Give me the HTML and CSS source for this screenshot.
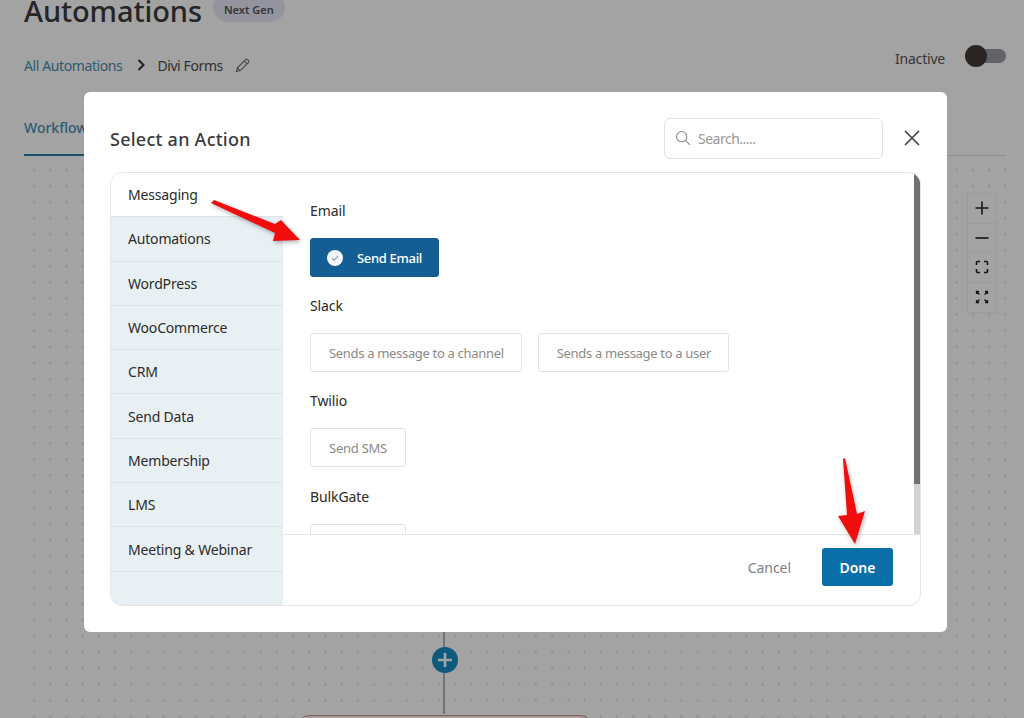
FILE: index.html
```html
<!DOCTYPE html>
<html lang="en">
<head>
<meta charset="utf-8">
<title>Select an Action</title>
<link rel="stylesheet" href="styles.css">
</head>
<body>
<div class="page">
  <header class="title-row">
    <h1 class="title">Automations</h1>
    <span class="badge">Next Gen</span>
  </header>
  <div class="crumb-row">
    <nav class="crumbs">
      <a class="crumb-link">All Automations</a>
      <svg class="chevron" viewBox="0 0 8 12"><path d="M1.500 1l5 5-5 5" fill="none" stroke="currentColor" stroke-width="2"/></svg>
      <span class="crumb-current">Divi Forms</span>
      <svg class="pencil" viewBox="0 0 16 16"><path d="M1.500 14.500l1-4L11 2a1.800 1.800 0 0 1 2.800 0l.3.3a1.800 1.800 0 0 1 0 2.700l-8.600 8.500zM2.500 10.500l3 3M10 3.200l2.800 2.800" fill="none" stroke="currentColor" stroke-width="1.100"/></svg>
    </nav>
    <div class="status">
      <span class="status-label">Inactive</span>
      <span class="toggle"><span class="toggle-thumb"></span></span>
    </div>
  </div>
  <div class="tabs"><span class="tab">Workflow</span></div>
  <main class="canvas">
    <div class="zoom-controls">
      <button class="zoom-cell"><svg viewBox="0 0 16 16"><path d="M8 1.500v13M1.500 8h13" stroke="currentColor" stroke-width="1.600"/></svg></button>
      <button class="zoom-cell"><svg viewBox="0 0 16 16"><path d="M1.500 8h13" stroke="currentColor" stroke-width="1.600"/></svg></button>
      <button class="zoom-cell"><svg viewBox="0 0 16 16"><path d="M2.500 6V3.500a1 1 0 0 1 1-1H6M10 2.500h2.500a1 1 0 0 1 1 1V6M13.500 10v2.500a1 1 0 0 1-1 1H10M6 13.500H3.500a1 1 0 0 1-1-1V10" fill="none" stroke="currentColor" stroke-width="1.600"/></svg></button>
      <button class="zoom-cell"><svg viewBox="0 0 16 16"><path d="M2.500 2.500l3 3M13.500 2.500l-3 3M2.500 13.500l3-3M13.500 13.500l-3-3M2.500 5V2.500H5M11 2.500h2.500V5M2.500 11v2.500H5M13.500 11v2.500H11" fill="none" stroke="currentColor" stroke-width="1.300"/></svg></button>
    </div>
    <div class="flow-line"></div>
    <div class="add-node"><svg viewBox="0 0 26 26"><path d="M13 6v14M6 13h14" stroke="#fff" stroke-width="2.600"/></svg></div>
    <div class="flow-node"></div>
  </main>
</div>

<div class="overlay">
  <section class="modal">
    <div class="modal-head">
      <h2 class="modal-title">Select an Action</h2>
      <label class="search">
        <svg class="search-icon" viewBox="0 0 18 18"><circle cx="7.500" cy="7.500" r="5.800" fill="none" stroke="currentColor" stroke-width="1.200"/><path d="M11.800 11.800l5 5" stroke="currentColor" stroke-width="1.200"/></svg>
        <span class="search-text">Search.....</span>
      </label>
      <svg class="close" viewBox="0 0 16 16"><path d="M1 1l14 14M15 1L1 15" stroke="currentColor" stroke-width="1.700"/></svg>
    </div>
    <div class="panel">
      <aside class="sidebar">
        <div class="side-item side-item-active">Messaging</div>
        <div class="side-item">Automations</div>
        <div class="side-item">WordPress</div>
        <div class="side-item">WooCommerce</div>
        <div class="side-item">CRM</div>
        <div class="side-item">Send Data</div>
        <div class="side-item">Membership</div>
        <div class="side-item">LMS</div>
        <div class="side-item">Meeting &amp; Webinar</div>
      </aside>
      <div class="body">
        <div class="scroll">
          <div class="groups">
            <div class="group">
              <h3 class="group-title">Email</h3>
              <div class="options">
                <button class="option option-selected">
                  <svg class="check" viewBox="0 0 16 16"><circle cx="8" cy="8" r="8" fill="#f4f7f9"/><path d="M4.800 8.200l2.200 2.200 4.200-4.600" fill="none" stroke="#8fa3b0" stroke-width="1.200"/></svg>
                  Send Email
                </button>
              </div>
            </div>
            <div class="group">
              <h3 class="group-title">Slack</h3>
              <div class="options">
                <button class="option">Sends a message to a channel</button>
                <button class="option">Sends a message to a user</button>
              </div>
            </div>
            <div class="group">
              <h3 class="group-title">Twilio</h3>
              <div class="options"><button class="option option-sms">Send SMS</button></div>
            </div>
            <div class="group">
              <h3 class="group-title">BulkGate</h3>
              <div class="options"><button class="option option-sms">Send SMS</button></div>
            </div>
          </div>
          <div class="scrollbar"><div class="scrollbar-thumb"></div></div>
        </div>
        <footer class="modal-foot">
          <button class="cancel">Cancel</button>
          <button class="done">Done</button>
        </footer>
      </div>
    </div>
  </section>
</div>

<svg class="arrows" viewBox="0 0 1024 718">
  <polygon points="214,200 275,224 281,220 300,240 273,241 275,233 211,203"/>
  <polygon points="843,459 847,515 838,516 855,544 865,511 857,514 845,458"/>
</svg>
</body>
</html>
```

FILE: styles.css
```css
* { box-sizing: border-box; }
html, body { margin: 0; height: 100%; }
body {
  position: relative;
  width: 1024px;
  height: 718px;
  overflow: hidden;
  background: #fff;
  font-family: "Noto Sans", "Open Sans", sans-serif;
  color: #333;
}
button { font: inherit; }
h1, h2, h3 { margin: 0; font-weight: 400; }

.page { height: 718px; padding: 0 18px 0 24px; display: flex; flex-direction: column; }
.title-row { display: flex; align-items: center; gap: 11px; height: 22px; flex: none; }
.title { font-size: 29px; line-height: 22px; color: #3a3a3a; font-weight: 500; letter-spacing: -.1px; }
.badge {
  height: 30px; margin-top: -8px; padding: 10px 11px 0;
  border-radius: 15px; background: #e6e8f6; color: #555; font-size: 11px; font-weight: 600; line-height: 16px;
}
.crumb-row { display: flex; align-items: center; justify-content: space-between; height: 44px; margin-top: 21px; flex: none; }
.crumbs { display: flex; align-items: center; height: 44px; font-size: 14px; letter-spacing: -.4px; color: #4d4d4d; }
.crumb-link { color: #4a8db0; }
.chevron { width: 8px; height: 12px; margin-left: 15px; color: #333; }
.crumb-current { margin-left: 12px; }
.pencil { width: 15px; height: 15px; margin-left: 12px; color: #666; }
.status { display: flex; align-items: center; gap: 21px; margin-top: -14px; }
.status-label { font-size: 14px; letter-spacing: -.2px; color: #555; }
.toggle { position: relative; display: block; width: 40px; height: 14px; margin-bottom: 4px; border-radius: 7px; background: #9a9aa4; }
.toggle-thumb { position: absolute; left: -1px; top: -4px; width: 22px; height: 22px; border-radius: 50%; background: #403a37; }
.tabs { height: 47px; margin-top: 22px; flex: none; display: flex; align-items: flex-end; border-bottom: 1px solid #dcdcdc; }
.tab { height: 47px; width: 70px; padding-top: 9px; font-size: 14px; font-weight: 500; color: #4a8db0; border-bottom: 2px solid #2a7fa8; margin-bottom: -1px; }

.canvas {
  position: relative;
  flex: 1;
  min-height: 0;
  overflow: hidden;
  background-image: radial-gradient(circle, #d0d0d0 0.8px, transparent 1.1px);
  background-size: 16.190px 16.080px;
  background-position: 2px 22px;
}
.zoom-controls {
  position: absolute; left: 943px; top: 37px; width: 30px;
  display: flex; flex-direction: column;
  background: #fff; border: 1px solid #f2f2f2;
}
.zoom-cell { display: flex; align-items: center; justify-content: center; width: 100%; height: 29.500px; padding: 0; background: none; border: 0; border-bottom: 1px solid #f2f2f2; color: #222; }
.zoom-cell:last-child { border-bottom: 0; }
.zoom-cell svg { width: 16px; height: 16px; }
.flow-line { position: absolute; left: 419px; top: 400px; bottom: 4px; width: 2px; background: #b5b5b5; }
.add-node { position: absolute; left: 408px; top: 491px; width: 26px; height: 26px; border-radius: 50%; background: #178cc5; }
.add-node svg { display: block; }
.flow-node { position: absolute; left: 272px; top: 559px; width: 298px; height: 40px; border: 1px solid #d98a8a; border-radius: 14px; background: #fff6f6; }

.overlay {
  position: absolute; inset: 0;
  padding: 92px 77px 86px 84px;
  background: rgba(0, 0, 0, .36);
}
.modal { height: 540px; padding: 0 26px 26px; display: flex; flex-direction: column; background: #fff; border-radius: 6px; }
.modal-head { display: flex; align-items: center; height: 80px; flex: none; padding-top: 14px; }
.modal-title { flex: 1; font-size: 18px; font-weight: 500; color: #3c3c3c; letter-spacing: .25px; }
.search { display: flex; align-items: center; gap: 7px; width: 219px; height: 41px; margin-top: -2px; padding-left: 10px; border: 1px solid #e2e2e2; border-radius: 6px; }
.search-icon { width: 16px; height: 16px; color: #8a8a8a; }
.search-text { font-size: 14px; letter-spacing: -.5px; color: #999; }
.close { width: 16px; height: 16px; margin: -2px 1px 0 21px; flex: none; color: #444; }
.panel { flex: 1; display: flex; min-height: 0; border: 1px solid #e6e6e6; border-radius: 12px; overflow: hidden; }
.sidebar { width: 172px; flex: none; background: #e9f0f4; }
.side-item { height: 44.300px; padding: 0 17px; display: flex; align-items: center; font-size: 14px; letter-spacing: -.18px; color: #2b2b2b; border-bottom: 1px solid #dde4e8; }
.side-item-active { background: #fff; }
.body { flex: 1; min-width: 0; display: flex; flex-direction: column; }
.scroll { flex: 1; min-height: 0; display: flex; overflow: hidden; }
.groups { flex: 1; padding: 28px 0 0 27px; }
.group { margin-bottom: 19.200px; }
.group-title { font-size: 14px; line-height: 20px; margin-bottom: 17px; letter-spacing: -.1px; color: #2b2b2b; }
.options { display: flex; gap: 16px; }
.option { height: 39px; padding: 0 17px 0 18px; display: flex; align-items: center; font-size: 13px; letter-spacing: -.32px; color: #8a8a8a; background: #fff; border: 1px solid #e2e2e2; border-radius: 3px; white-space: nowrap; }
.option-sms { width: 96px; justify-content: center; padding: 0; letter-spacing: -.25px; }
.option-selected { width: 129px; padding: 0 16px; gap: 14px; color: #fff; font-weight: 500; background: #155e93; border-color: #155e93; }
.check { width: 16px; height: 16px; flex: none; }
.scrollbar { width: 6px; flex: none; background: #d2d2d2; }
.scrollbar-thumb { height: 311px; background: #707070; }
.modal-foot { height: 71px; flex: none; display: flex; align-items: flex-start; justify-content: flex-end; gap: 31px; padding: 13px 27px 0 0; border-top: 1px solid #e6e6e6; }
.cancel { height: 38px; padding: 0; background: none; border: 0; font-size: 14px; letter-spacing: -.05px; color: #7e8087; }
.done { width: 71px; height: 38px; padding: 1px 0 0; background: #0a6ea8; border: 0; border-radius: 3px; color: #fff; font-size: 14px; font-weight: 600; }

.arrows { position: absolute; left: 0; top: 0; width: 1024px; height: 718px; fill: #f20d0d; filter: drop-shadow(1px 2px 2px rgba(0,0,0,.3)); pointer-events: none; }
```
